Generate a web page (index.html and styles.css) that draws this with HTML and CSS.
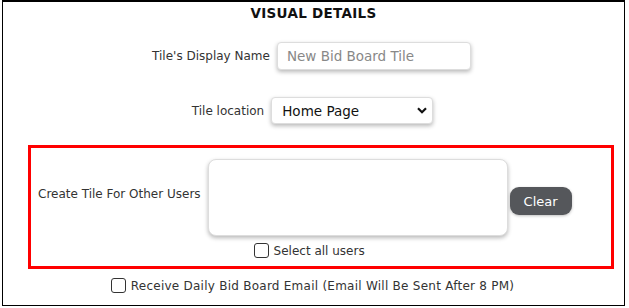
FILE: index.html
```html
<!DOCTYPE html>
<html lang="en">
<head>
  <meta charset="UTF-8">
  <title>Visual Details</title>
  <link rel="stylesheet" href="styles.css">
</head>
<body>
  <div class="panel">
    <h2 class="title">VISUAL DETAILS</h2>

    <div class="row row-name">
      <label for="tileName">Tile's Display Name</label>
      <input type="text" id="tileName" class="field name-field" placeholder="New Bid Board Tile">
    </div>

    <div class="row row-location">
      <label for="tileLocation">Tile location</label>
      <div class="select-wrap">
        <select id="tileLocation" class="field location-field">
          <option>Home Page</option>
        </select>
        <svg class="chevron" width="10" height="7" viewBox="0 0 10 7"><path d="M1 1.2 5 5.2 9 1.2" fill="none" stroke="#111" stroke-width="2.2"/></svg>
      </div>
    </div>

    <div class="users-box">
      <div class="users-row">
        <label for="otherUsers">Create Tile For Other Users</label>
        <div class="users-col">
          <textarea id="otherUsers" class="field users-field"></textarea>
          <label class="check"><span class="box"></span>Select all users</label>
        </div>
        <button class="clear-btn">Clear</button>
      </div>
    </div>

    <label class="check email-check"><span class="box"></span>Receive Daily Bid Board Email&nbsp;(Email Will Be Sent After 8 PM)</label>
  </div>
</body>
</html>
```

FILE: styles.css
```css
body {
  margin: 0;
  font-family: 'DejaVu Sans', sans-serif;
  color: #222;
  background: #fff;
}
.panel {
  margin-left: 2px;
  width: 623px;
  height: 306px;
  box-sizing: border-box;
  border: 1px solid #000;
  border-top-width: 2px;
}
.title {
  margin: 1px 0 0;
  text-align: center;
  font-size: 13.5px;
  font-weight: bold;
  letter-spacing: 0.3px;
  color: #111;
  height: 20px;
  line-height: 20px;
}
.row {
  display: flex;
  align-items: center;
  justify-content: center;
  font-size: 12px;
}
.row label {
  margin-right: 7px;
  color: #333;
}
.field {
  box-sizing: border-box;
  border: 1px solid #ddd;
  border-radius: 4px;
  background: #fff;
  box-shadow: 0 2px 4px rgba(0, 0, 0, 0.28);
  font-family: 'DejaVu Sans', sans-serif;
  outline: none;
}
.row-name {
  margin-top: 19px;
  padding-right: 4px;
}
.name-field {
  width: 194px;
  height: 28px;
  padding: 0 9px;
  font-size: 13.5px;
}
.name-field::placeholder {
  color: #888;
}
.row-location {
  margin-top: 27px;
  padding-right: 2px;
}
.select-wrap {
  position: relative;
}
.location-field {
  appearance: none;
  width: 162px;
  height: 27px;
  padding: 0 10px;
  font-size: 13.5px;
  color: #111;
}
.chevron {
  position: absolute;
  right: 6px;
  top: 10px;
}
.users-box {
  margin: 21px 0 0 25px;
  width: 586px;
  height: 124px;
  box-sizing: border-box;
  border: 3px solid #f00;
}
.users-row {
  display: flex;
  align-items: flex-start;
  font-size: 12px;
}
.users-row > label {
  margin: 39px 7px 0 7px;
  color: #333;
}
.users-col {
  margin-top: 11px;
  display: flex;
  flex-direction: column;
}
.users-field {
  width: 300px;
  height: 77px;
  border-radius: 8px;
  resize: none;
}
.clear-btn {
  margin: 39px 0 0 2px;
  width: 62px;
  height: 28px;
  border: none;
  border-radius: 9px;
  background: #55575b;
  color: #fff;
  font-family: 'DejaVu Sans', sans-serif;
  font-size: 13px;
  box-shadow: 0 1px 3px rgba(0, 0, 0, 0.25);
}
.check {
  display: flex;
  align-items: center;
  font-size: 12px;
  color: #333;
}
.users-col .check {
  margin: 7px 0 0 46px;
}
.box {
  width: 13px;
  height: 13px;
  border: 1px solid #333;
  border-radius: 3px;
  margin-right: 5px;
}
.email-check {
  justify-content: center;
  margin-top: 9px;
  padding-right: 2px;
  letter-spacing: 0.25px;
}
```
